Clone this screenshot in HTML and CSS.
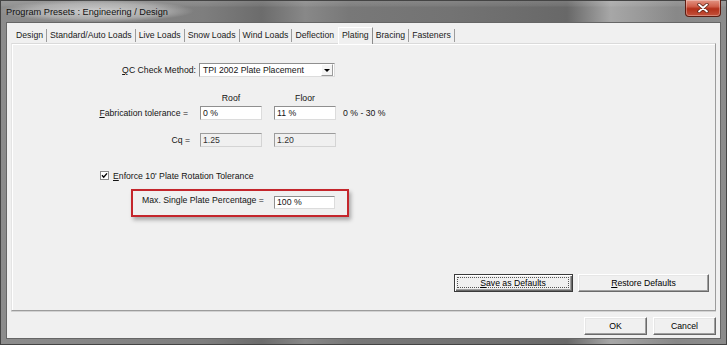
FILE: index.html
```html
<!DOCTYPE html>
<html lang="en">
<head>
<meta charset="UTF-8">
<meta name="viewport" content="width=device-width, initial-scale=1.0">
<title>Program Presets : Engineering / Design</title>
<link rel="stylesheet" href="styles.css">
</head>
<body>
<div class="window">
  <div class="titlebar">
    <span class="title">Program Presets : Engineering / Design</span>
    <span class="close-btn">
      <svg width="12" height="10" viewBox="0 0 12 10">
        <path d="M2 1.5 L10 8.5 M10 1.5 L2 8.5" stroke="#5b2418" stroke-width="3.4" stroke-linecap="round"/>
        <path d="M2 1.5 L10 8.5 M10 1.5 L2 8.5" stroke="#fff" stroke-width="1.8" stroke-linecap="round"/>
      </svg>
    </span>
  </div>

  <div class="client">
    <div class="tabs">
      <span class="tab">Design</span>
      <span class="tab">Standard/Auto Loads</span>
      <span class="tab">Live Loads</span>
      <span class="tab">Snow Loads</span>
      <span class="tab">Wind Loads</span>
      <span class="tab no-sep">Deflection</span>
      <span class="tab active">Plating</span>
      <span class="tab">Bracing</span>
      <span class="tab">Fasteners</span>
    </div>

    <div class="panel">
      <div class="row qc-row">
        <span class="lbl"><u>Q</u>C Check Method:</span>
        <div class="select">
          <span class="select-text">TPI 2002 Plate Placement</span>
          <span class="select-arrow"><span class="tri"></span></span>
        </div>
      </div>

      <div class="row head-row">
        <span></span>
        <span class="col-head">Roof</span>
        <span></span>
        <span class="col-head">Floor</span>
      </div>

      <div class="row fab-row">
        <span class="lbl"><u>F</u>abrication tolerance =</span>
        <span class="field">0 %</span>
        <span></span>
        <span class="field">11 %</span>
        <span class="range">0 % - 30 %</span>
      </div>

      <div class="row cq-row">
        <span class="lbl">Cq =</span>
        <span class="field disabled">1.25</span>
        <span></span>
        <span class="field disabled">1.20</span>
      </div>

      <div class="check-row">
        <svg class="checkbox" width="9" height="9" viewBox="0 0 9 9">
          <rect x="0.5" y="0.5" width="8" height="8" fill="#fff" stroke="#8a8a8a"/>
          <path d="M2 4.3 L3.7 6.2 L7 2.4" fill="none" stroke="#000" stroke-width="1.4"/>
        </svg>
        <span><u>E</u>nforce 10' Plate Rotation Tolerance</span>
      </div>

      <div class="highlight">
        <span class="hl-label">Max. Single Plate Percentage =</span>
        <span class="field hl-field">100 %</span>
      </div>

      <div class="panel-buttons">
        <button class="btn default save"><span class="focus"><u>S</u>ave as Defaults</span></button>
        <button class="btn restore"><u>R</u>estore Defaults</button>
      </div>
    </div>

    <div class="footer">
      <button class="btn small">OK</button>
      <button class="btn small">Cancel</button>
    </div>
  </div>
</div>
</body>
</html>
```

FILE: styles.css
```css
* {
  box-sizing: border-box;
}
body {
  margin: 0;
  font-family: "Liberation Sans", Arial, sans-serif;
  font-size: 8.7px;
  color: #141414;
  background: #fff;
}
u {
  text-decoration: underline;
}

/* window frame */
.window {
  width: 727px;
  height: 345px;
  padding: 0 6px 6px 6px;
  display: flex;
  flex-direction: column;
  background:
    linear-gradient(180deg, rgba(255,255,255,0.14) 0, rgba(255,255,255,0.06) 6px, rgba(0,0,0,0) 7px),
    linear-gradient(90deg, #8c8c8c 0%, #7e7e7e 28%, #6c6c6c 36%, #888 42%, #787878 48%, #737373 62%, #686868 78%, #a7a7a7 84%, #9a9a9a 88%, #888 93%, #8c8c8c 100%);
  box-shadow: inset 0 0 0 1px #444;
}
.titlebar {
  height: 22px;
  display: flex;
  justify-content: space-between;
  align-items: flex-start;
}
.title {
  margin-left: -6px;
  padding: 2px 26px 0 6px;
  line-height: 20px;
  font-size: 9.2px;
  color: #111;
  background: radial-gradient(closest-side, rgba(214,214,214,0.9), rgba(200,200,200,0.55) 70%, rgba(200,200,200,0));
}
.close-btn {
  width: 36px;
  height: 17px;
  display: flex;
  align-items: center;
  justify-content: center;
  border: 1px solid #5c1d12;
  border-top: none;
  border-radius: 0 0 4px 4px;
  background: linear-gradient(180deg, #e39483 0%, #d0604b 40%, #b3301a 55%, #c4523b 100%);
  box-shadow: inset 0 0 0 1px rgba(255,255,255,0.3);
}

/* client area */
.client {
  flex: 1;
  display: flex;
  flex-direction: column;
  background: #f0f0f0;
  border: 1px solid #666;
  padding: 4px 4px 3px 4px;
}

/* tabs */
.tabs {
  height: 16px;
  display: flex;
  align-items: flex-end;
  padding-left: 2px;
}
.tab {
  height: 13px;
  line-height: 13px;
  margin-bottom: 1px;
  padding: 0 3px;
  border-right: 1px solid #9c9c9c;
  color: #1a1a1a;
  white-space: nowrap;
}
.tab.no-sep {
  border-right: none;
}
.tab.active {
  position: relative;
  z-index: 1;
  height: 17px;
  line-height: 14px;
  margin-bottom: -1px;
  margin-left: 1px;
  padding: 0 3px 3px 3px;
  background: #f0f0f0;
  border-top: 1px solid #fff;
  border-left: 1px solid #fff;
  border-right: 1px solid #8c8c8c;
}

/* panel */
.panel {
  height: 268px;
  display: flex;
  flex-direction: column;
  border: 1px solid;
  border-color: #dadada #9c9c9c #9c9c9c #e4e4e4;
  box-shadow: inset 1px 1px 0 #fff, 0 1px 0 #d2d2d2;
  padding: 0 6px 18px 0;
}
.row {
  display: grid;
  grid-template-columns: 188px 62px 12px 62px auto;
  align-items: center;
}
.lbl {
  text-align: right;
  padding-right: 4px;
  white-space: nowrap;
}
.qc-row {
  grid-template-columns: 187px 136px;
  height: 14px;
  margin-top: 19px;
}
.qc-row .lbl {
  padding-right: 3px;
}
.head-row {
  height: 12px;
  margin-top: 15px;
}
.col-head {
  text-align: center;
}
.fab-row {
  height: 14px;
  margin-top: 2px;
}
.fab-row .lbl {
  padding-right: 12px;
}
.cq-row {
  height: 14px;
  margin-top: 13px;
}
.cq-row .lbl {
  padding-right: 10px;
}
.range {
  padding-left: 7px;
}

.field {
  height: 14px;
  line-height: 12px;
  padding-left: 2px;
  background: #fff;
  border: 1px solid;
  border-color: #8f8f8f #dcdcdc #dcdcdc #8f8f8f;
  white-space: nowrap;
}
.field.disabled {
  background: #f0f0f0;
  border-color: #9c9c9c #d4d4d4 #d4d4d4 #9c9c9c;
  color: #333;
}

.select {
  height: 14px;
  display: flex;
  align-items: center;
  background: #fff;
  border: 1px solid;
  border-color: #8f8f8f #dcdcdc #dcdcdc #8f8f8f;
}
.select-text {
  flex: 1;
  padding-left: 3px;
}
.select-arrow {
  width: 12px;
  height: 12px;
  margin-right: 1px;
  display: flex;
  align-items: center;
  justify-content: center;
  background: #f4f4f4;
  border: 1px solid;
  border-color: #fff #9c9c9c #9c9c9c #fff;
}
.tri {
  width: 0;
  height: 0;
  border-left: 3px solid transparent;
  border-right: 3px solid transparent;
  border-top: 3px solid #000;
}

.check-row {
  height: 13px;
  margin-top: 22px;
  padding-left: 88px;
  display: flex;
  align-items: center;
  gap: 4px;
}

.highlight {
  width: 218px;
  height: 28px;
  margin: 7px 0 0 119px;
  padding: 5px 0 0 9px;
  display: flex;
  align-items: flex-start;
  border: 2px solid #c4262c;
  box-shadow: 2px 3px 4px rgba(0,0,0,0.3);
}
.hl-label {
  width: 132px;
  line-height: 12px;
  margin-top: -2px;
  white-space: nowrap;
}
.hl-field {
  width: 61px;
  height: 13px;
  line-height: 11px;
}

/* buttons */
.btn {
  height: 18px;
  padding: 0;
  display: flex;
  align-items: center;
  justify-content: center;
  font: inherit;
  color: #000;
  background: #f0f0f0;
  border: 1px solid;
  border-color: #fff #6a6a6a #6a6a6a #fff;
  box-shadow: inset -1px -1px 0 #a0a0a0, inset 1px 1px 0 #e6e6e6;
}
.btn.default {
  border-color: #3a3a3a;
  box-shadow: inset 1px 1px 0 #fff, inset -1px -1px 0 #6a6a6a, inset -2px -2px 0 #a0a0a0;
}
.focus {
  align-self: stretch;
  flex: 1;
  margin: 2px 3px 3px 2px;
  display: flex;
  align-items: center;
  justify-content: center;
  border: 1px dotted #555;
}
.panel-buttons {
  margin-top: auto;
  display: flex;
  justify-content: flex-end;
  gap: 5px;
}
.save {
  width: 119px;
}
.restore {
  width: 131px;
}
.footer {
  margin-top: 6px;
  display: flex;
  justify-content: flex-end;
  gap: 6px;
}
.btn.small {
  width: 63px;
}
```
